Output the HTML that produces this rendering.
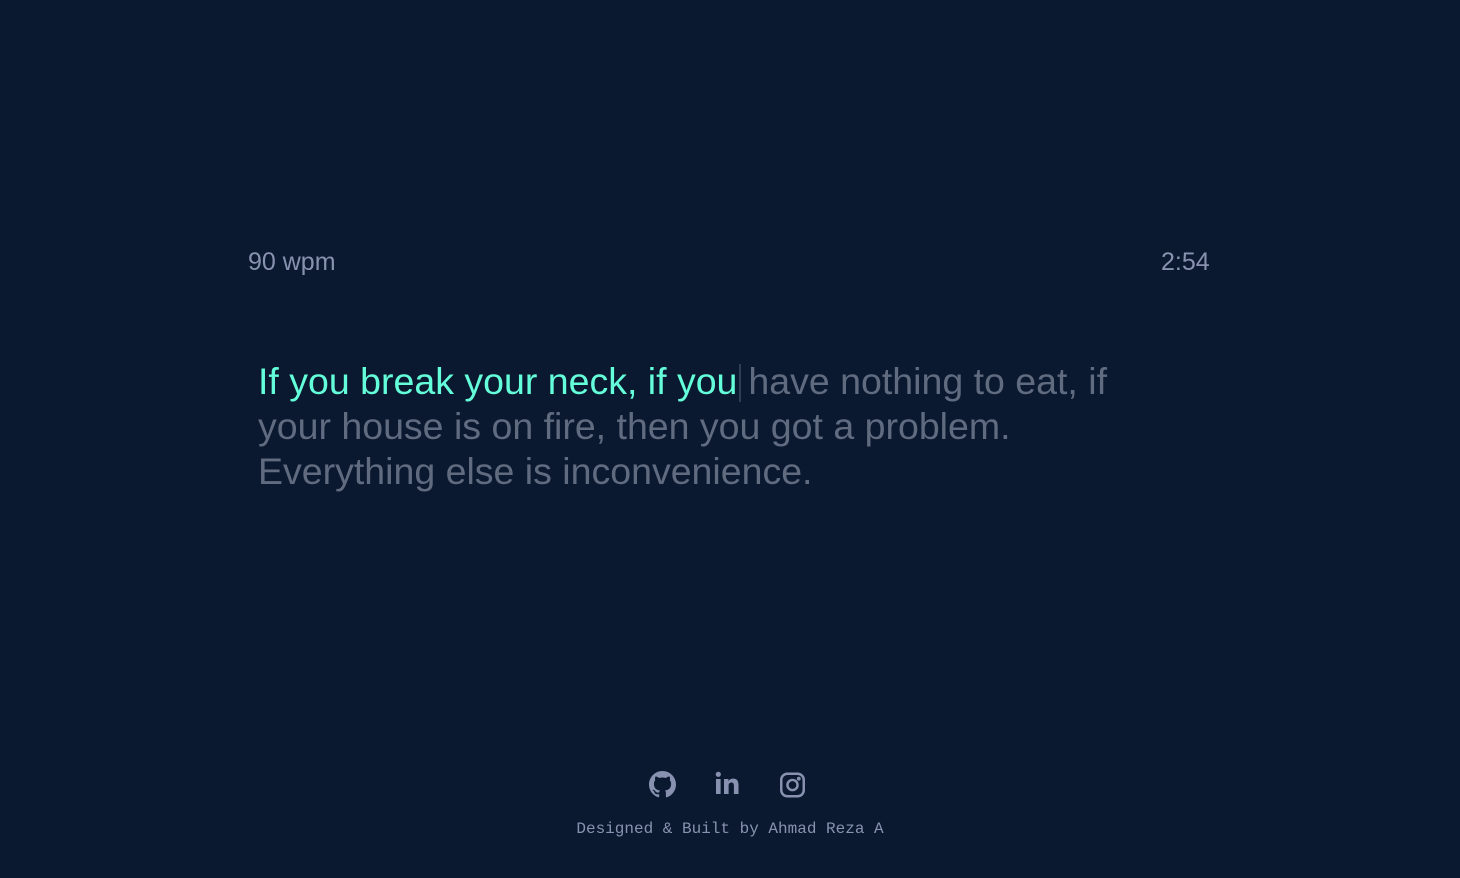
<!DOCTYPE html>
<html><head><meta charset="utf-8"><style>
html,body{margin:0;padding:0;background:#0a192f;width:1460px;height:878px;overflow:hidden;font-family:"Liberation Sans",sans-serif;}
.stat{position:absolute;top:248px;font-size:25px;color:#8892b0;}
.txt{position:absolute;left:258px;top:359px;font-size:37.5px;line-height:45px;color:#606b80;white-space:nowrap;}
.g{color:#64ffda}
.caret{display:inline-block;width:2px;height:38px;background:#2d3d55;vertical-align:-8px;margin:0 7px 0 2px}
.icons{position:absolute;top:771px;left:0;width:1460px;}
.icons svg{position:absolute;top:0}
.foot{position:absolute;top:820px;left:0;width:1460px;text-align:center;font-family:"Liberation Mono",monospace;font-size:16px;color:#8892b0;}
</style></head><body>
<div class="stat" style="left:248px">90 wpm</div>
<div class="stat" style="left:1161px">2:54</div>
<div class="txt"><span class="g">If you break your neck, if you</span><span class="caret"></span>have nothing to eat, if<br>your house is on fire, then you got a problem.<br>Everything else is inconvenience.</div>
<div class="icons">
<svg style="left:649px" width="27" height="27" viewBox="0 0 16 16" fill="#8892b0"><path d="M8 0C3.58 0 0 3.58 0 8c0 3.54 2.29 6.53 5.47 7.59.4.07.55-.17.55-.38 0-.19-.01-.82-.01-1.49-2.01.37-2.53-.49-2.69-.94-.09-.23-.48-.94-.82-1.13-.28-.15-.68-.52-.01-.53.63-.01 1.08.58 1.23.82.72 1.21 1.87.87 2.33.66.07-.52.28-.87.51-1.07-1.78-.2-3.64-.89-3.64-3.95 0-.87.31-1.59.82-2.15-.08-.2-.36-1.02.08-2.12 0 0 .67-.21 2.2.82.64-.18 1.32-.27 2-.27.68 0 1.36.09 2 .27 1.53-1.04 2.2-.82 2.2-.82.44 1.1.16 1.92.08 2.12.51.56.82 1.27.82 2.15 0 3.07-1.87 3.75-3.65 3.95.29.25.54.73.54 1.48 0 1.07-.01 1.93-.01 2.2 0 .21.15.46.55.38A8.013 8.013 0 0016 8c0-4.42-3.58-8-8-8z"/></svg>
<svg style="left:715px" width="24" height="24" viewBox="0 0 24 24" fill="#8892b0"><rect x="1" y="8" width="4.6" height="15"/><circle cx="3.3" cy="3.3" r="2.6"/><path d="M9 8h4.4v2.1c.7-1.3 2.3-2.5 4.7-2.5 4.6 0 5.4 3 5.4 6.9V23h-4.6v-7.5c0-1.8 0-4-2.5-4s-2.8 1.9-2.8 3.9V23H9z"/></svg>
<svg style="left:779px" width="27" height="28" viewBox="0 0 24 24" fill="none" stroke="#8892b0" stroke-width="2.2"><rect x="2" y="2" width="20" height="20" rx="5.5"/><circle cx="12" cy="12" r="4.5"/><circle cx="17.6" cy="6.4" r=".6" fill="#8892b0"/></svg>
</div>
<div class="foot">Designed &amp; Built by Ahmad Reza A</div>
</body></html>
